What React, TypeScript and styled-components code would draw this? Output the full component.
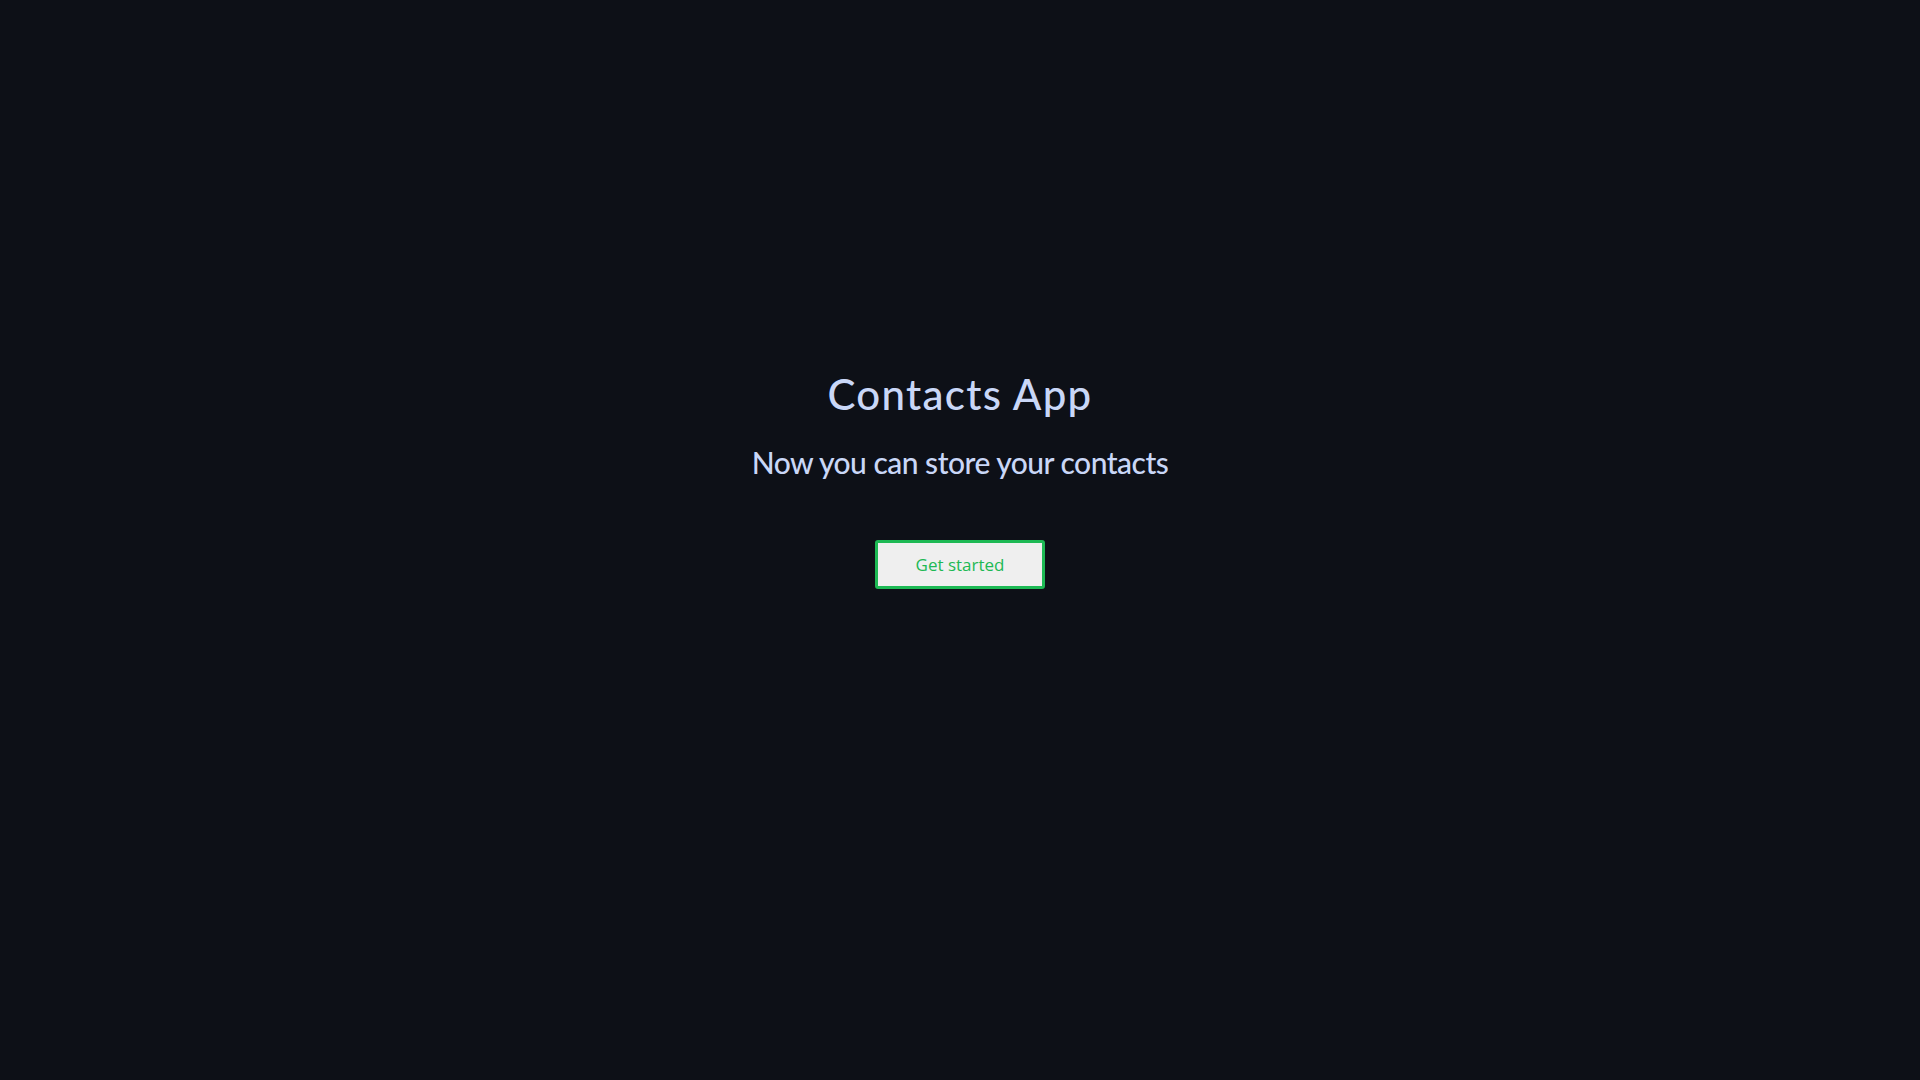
import React from "react";
import styled, { createGlobalStyle } from "styled-components";

const Global = createGlobalStyle`
  html, body { margin: 0; padding: 0; background: #0d1017; }
  body { min-height: 100vh; }
`;

const Page = styled.main`
  min-height: 100vh;
  background: #0d1017;
  display: flex;
  flex-direction: column;
  align-items: center;
  padding-top: 368px;
  box-sizing: border-box;
  font-family: "Lato", "Noto Sans", sans-serif;
`;

const Title = styled.h1`
  margin: 0;
  font-size: 42px;
  font-weight: 500;
  letter-spacing: 1.3px;
  color: #c9d7f7;
  line-height: 52px;
`;

const Subtitle = styled.h2`
  margin: 22px 0 0;
  font-size: 30px;
  font-weight: 500;
  letter-spacing: -0.5px;
  color: #c9d7f7;
  line-height: 40px;
`;

const StartButton = styled.button`
  margin-top: 58px;
  width: 170px;
  height: 49px;
  box-sizing: border-box;
  background: #efefef;
  border: 3px solid #1db954;
  border-radius: 3px;
  color: #1db954;
  font-family: "Open Sans", "Noto Sans", sans-serif;
  font-size: 17px;
  cursor: pointer;
`;

export default function App() {
  return (
    <>
      <Global />
      <Page>
        <Title>Contacts App</Title>
        <Subtitle>Now you can store your contacts</Subtitle>
        <StartButton>Get started</StartButton>
      </Page>
    </>
  );
}
